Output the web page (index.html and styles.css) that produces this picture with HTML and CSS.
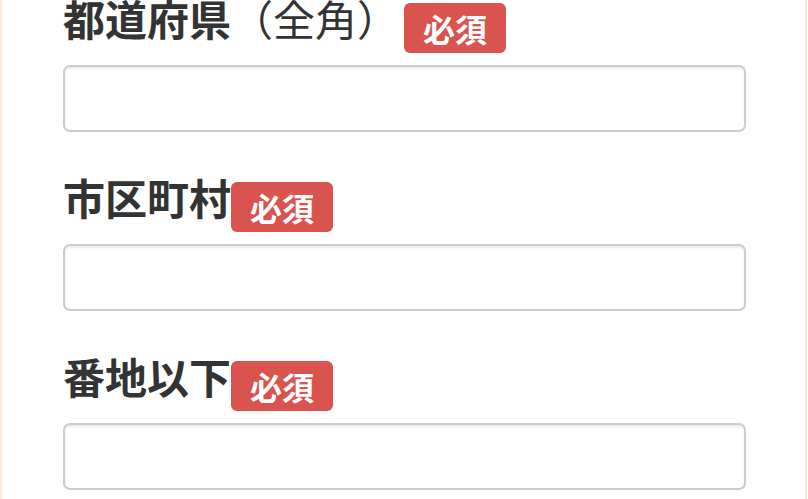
FILE: index.html
```html
<!DOCTYPE html>
<html lang="ja">
<head>
<meta charset="utf-8">
<link rel="stylesheet" href="styles.css">
</head>
<body>
<div class="page">
  <form class="form">
    <div class="group">
      <div class="label"><span class="label-text">都道府県<span class="note">（全角）</span></span><span class="badge badge-spaced">必須</span></div>
      <input class="field" type="text">
    </div>
    <div class="group">
      <div class="label"><span class="label-text">市区町村</span><span class="badge">必須</span></div>
      <input class="field" type="text">
    </div>
    <div class="group">
      <div class="label"><span class="label-text">番地以下</span><span class="badge">必須</span></div>
      <input class="field" type="text">
    </div>
  </form>
</div>
</body>
</html>
```

FILE: styles.css
```css
html, body {
  margin: 0;
  padding: 0;
  background: #ffffff;
  overflow: hidden;
}
body {
  font-family: "Noto Sans CJK JP", "Noto Sans", sans-serif;
  color: #333333;
}
.page {
  width: 807px;
  height: 499px;
  border-left: 2px solid #fbedd2;
  border-right: 2px solid #fbedd2;
  padding-left: 61px;
  box-sizing: border-box;
  overflow: hidden;
}
.form {
  width: 683px;
  margin-top: -7px;
  display: flex;
  flex-direction: column;
  gap: 40px;
}
.group {
  display: flex;
  flex-direction: column;
  gap: 12px;
}
.label {
  display: flex;
  align-items: flex-start;
}
.label-text {
  font-size: 42px;
  font-weight: 700;
  line-height: 50px;
  white-space: nowrap;
}
.note {
  font-weight: 400;
}
.badge {
  display: inline-block;
  background: #d9534f;
  color: #ffffff;
  font-size: 32px;
  font-weight: 700;
  line-height: 50px;
  height: 50px;
  padding: 0 19px;
  border-radius: 6px;
  margin-top: 10px;
  white-space: nowrap;
}
.badge-spaced {
  margin-left: 5px;
}
.field {
  display: block;
  width: 683px;
  height: 67px;
  box-sizing: border-box;
  border: 2px solid #cccccc;
  border-radius: 7px;
  box-shadow: inset 0 2px 2px rgba(0, 0, 0, 0.075);
  background: #ffffff;
  margin: 0;
  padding: 0 20px;
  font-size: 28px;
}
```
